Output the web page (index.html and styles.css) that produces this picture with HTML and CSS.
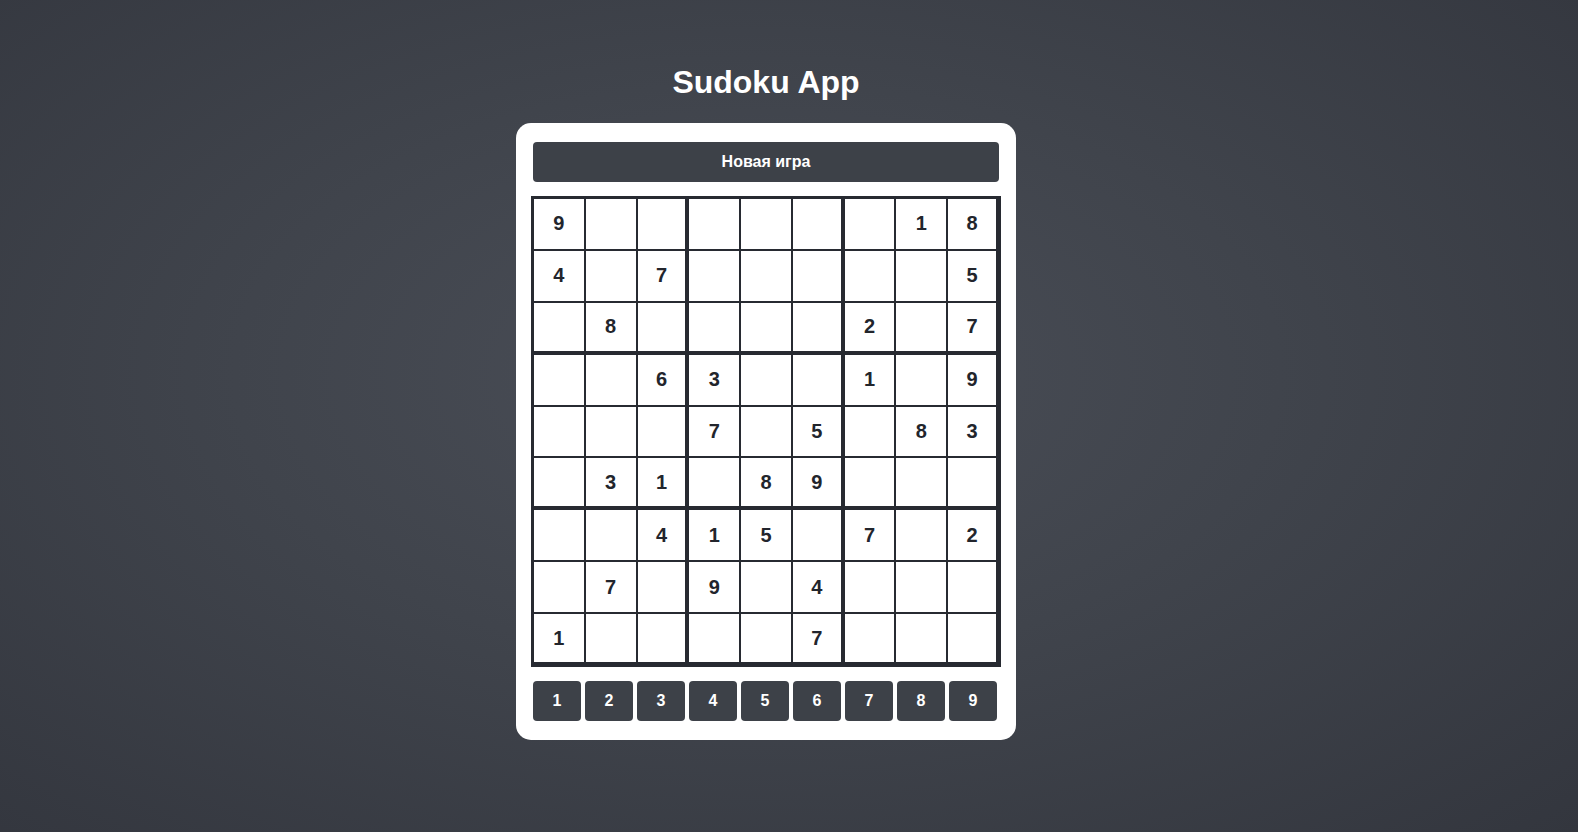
FILE: index.html
```html
<!DOCTYPE html>
<html lang="ru">
<head>
<meta charset="utf-8">
<title>Sudoku App</title>
<link rel="stylesheet" href="styles.css">
</head>
<body>
<div class="page">
  <h1 class="title">Sudoku App</h1>
  <div class="card">
    <button class="new-game">Новая игра</button>
    <div class="board" id="board"></div>
    <div class="pad">
      <button class="num">1</button>
      <button class="num">2</button>
      <button class="num">3</button>
      <button class="num">4</button>
      <button class="num">5</button>
      <button class="num">6</button>
      <button class="num">7</button>
      <button class="num">8</button>
      <button class="num">9</button>
    </div>
  </div>
</div>
<script>
  var puzzle = [
    "9      18",
    "4 7     5",
    " 8    2 7",
    "  63  1 9",
    "   7 5 83",
    " 31 89   ",
    "  415 7 2",
    " 7 9 4   ",
    "1    7   "
  ];
  var board = document.getElementById('board');
  for (var r = 0; r < 9; r++) {
    for (var c = 0; c < 9; c++) {
      var d = document.createElement('div');
      d.className = 'cell';
      if (c % 3 === 2) d.className += ' box-right';
      if (r % 3 === 2) d.className += ' box-bottom';
      var ch = puzzle[r].charAt(c);
      d.textContent = ch === ' ' ? '' : ch;
      board.appendChild(d);
    }
  }
</script>
</body>
</html>
```

FILE: styles.css
```css
html, body {
  margin: 0;
  height: 100%;
}
body {
  font-family: "Liberation Sans", Arial, sans-serif;
  background: radial-gradient(ellipse at 48% 45%, #4a4e57 0%, #40444c 45%, #33363e 100%);
  color: #fff;
}
.page {
  display: flex;
  flex-direction: column;
  align-items: center;
  padding-top: 64px;
  padding-right: 46px;
}
.title {
  margin: 0 0 22px;
  font-size: 32px;
  line-height: 37px;
  font-weight: bold;
  color: #fff;
}
.card {
  width: 500px;
  box-sizing: border-box;
  background: #fff;
  border-radius: 15px;
  padding: 19px 15px 19px;
  display: flex;
  flex-direction: column;
}
.new-game {
  margin: 0 2px 14px;
  height: 40px;
  border: none;
  border-radius: 4px;
  background: #3d4148;
  color: #fff;
  font-family: "Liberation Sans", Arial, sans-serif;
  font-weight: bold;
  font-size: 16px;
  padding: 0;
}
.board {
  width: 470px;
  height: 471px;
  box-sizing: border-box;
  border: 2px solid #272a31;
  display: grid;
  grid-template-columns: repeat(9, 1fr);
  grid-template-rows: repeat(9, 1fr);
}
.cell {
  border: 1px solid #272a31;
  display: flex;
  align-items: center;
  justify-content: center;
  font-size: 20px;
  font-weight: bold;
  color: #22252c;
  background: #fff;
}
.box-right {
  border-right-width: 3px;
}
.box-bottom {
  border-bottom-width: 3px;
}
.pad {
  display: flex;
  gap: 4px;
  padding: 0 2px;
  margin-top: 14px;
}
.num {
  width: 48px;
  height: 40px;
  border: none;
  border-radius: 4px;
  background: #3d4148;
  color: #fff;
  font-family: "Liberation Sans", Arial, sans-serif;
  font-weight: bold;
  font-size: 16px;
  padding: 0;
}
```
